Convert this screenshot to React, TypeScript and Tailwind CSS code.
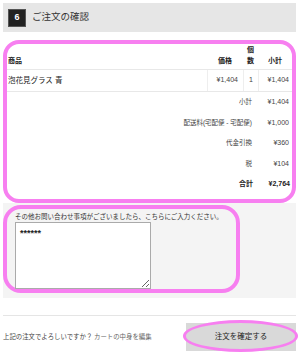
import React from 'react';

const PINK = 'border-[#f77ff0]';

const summary = [
  { label: '小計', value: '¥1,404' },
  { label: '配送料(宅配便 - 宅配便)', value: '¥1,000' },
  { label: '代金引換', value: '¥360' },
  { label: '税', value: '¥104' },
];

export default function App() {
  return (
    <div
      className="w-[300px] h-[354px] bg-white pt-[3px] pl-[3px] pr-[4px] text-[#333] overflow-hidden"
      style={{ fontFamily: '"Liberation Sans", "Noto Sans CJK JP", sans-serif' }}
    >
      {/* step header */}
      <div className="h-[29px] bg-[#e6e6e6] flex items-center pl-[5px] gap-[6px]">
        <div className="w-[18px] h-[18px] bg-[#222] border border-[#555] text-white text-[9px] font-bold flex items-center justify-center">
          6
        </div>
        <span className="text-[9.5px] text-[#333]">ご注文の確認</span>
      </div>

      {/* order table */}
      <div className={`mt-[8px] h-[163px] border-[4px] ${PINK} rounded-[16px] bg-white`}>
        <div className="grid grid-cols-[1fr_36px_15px_34px] h-[25px] items-end pb-[5px] text-[7px] font-bold text-[#222] leading-[11px]">
          <div className="pl-[1px]">商品</div>
          <div className="text-center">価格</div>
          <div className="text-center leading-[11px]">個<br />数</div>
          <div className="text-center">小計</div>
        </div>
        <div className="grid grid-cols-[1fr_36px_15px_34px] h-[23px] border-y border-[#e8e8e8] text-[7px] text-[#444]">
          <div className="flex items-center pl-[1px] text-[7.5px] text-[#222]">泡花見グラス 青</div>
          <div className="flex items-center justify-end pr-[5px] border-l border-[#eeeeee]">¥1,404</div>
          <div className="flex items-center justify-center border-l border-[#eeeeee]">1</div>
          <div className="flex items-center justify-end pr-[3px] border-l border-[#eeeeee]">¥1,404</div>
        </div>
        {summary.map((row) => (
          <div key={row.label} className="grid grid-cols-[1fr_34px] h-[20.5px] items-center text-[6.5px] text-[#444]">
            <div className="text-right pr-[6px]">{row.label}</div>
            <div className="text-right pr-[3px] text-[7px]">{row.value}</div>
          </div>
        ))}
        <div className="grid grid-cols-[1fr_34px] h-[20.5px] items-center text-[7px] font-bold text-[#222]">
          <div className="text-right pr-[5px]">合計</div>
          <div className="text-right pr-[2px]">¥2,764</div>
        </div>
      </div>

      {/* comment area */}
      <div className="h-[95px] bg-[#f4f4f4] pt-[2px]">
        <div className={`w-[237px] h-[88px] border-[4px] ${PINK} rounded-[18px] pl-[8px] pt-[3px]`}>
          <div className="text-[6.5px] leading-[9px] text-[#333]">
            その他お問い合わせ事項がございましたら、こちらにご入力ください。
          </div>
          <textarea
            readOnly
            defaultValue="******"
            className="mt-[1px] block w-[136px] h-[67px] bg-white border border-[#aaaaaa] px-[4px] pt-[6px] text-[9px] leading-[9px] font-bold text-[#222] outline-none"
          />
        </div>
      </div>

      {/* confirm row */}
      <div className="mt-[17px] border-t border-[#e5e5e5] pt-[6px] flex items-center justify-between">
        <div className="text-[6.4px] text-[#444]">
          上記の注文でよろしいですか？ <span className="text-[#666]">カートの中身を編集</span>
        </div>
        <div className="relative">
          <button className="w-[110px] h-[28px] bg-[#d9d9d9] text-[7.5px] text-[#222]">注文を確定する</button>
          <div className="absolute -left-[3px] -right-[2px] -top-[2px] -bottom-[1px] border-[3px] border-[#f77ff0] rounded-[50%] pointer-events-none" />
        </div>
      </div>
    </div>
  );
}
